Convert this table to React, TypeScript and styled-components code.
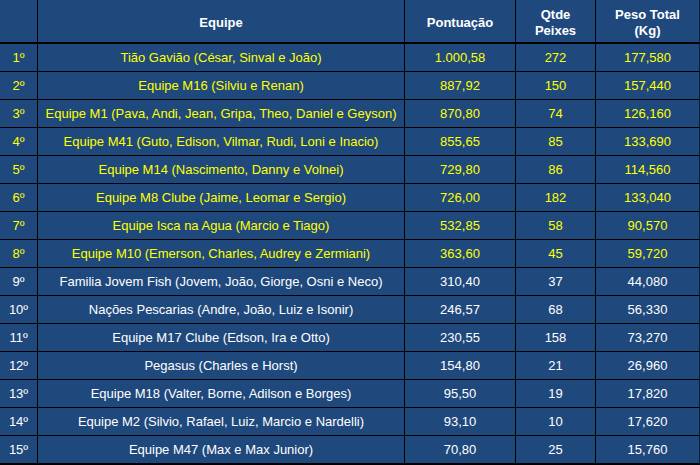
import React from 'react';
import styled, { createGlobalStyle } from 'styled-components';

const GlobalStyle = createGlobalStyle`
  html, body {
    margin: 0;
    padding: 0;
    background: #1f497d;
  }
`;

const Table = styled.table`
  width: 700px;
  table-layout: fixed;
  border-collapse: separate;
  border-spacing: 0;
  background: #1f497d;
  font-family: 'Liberation Sans', Arial, sans-serif;
`;

const HeadCell = styled.th<{ $w: number }>`
  width: ${p => p.$w}px;
  height: 44px;
  padding: 3px 2px 0;
  box-sizing: border-box;
  border-right: 1px solid #000;
  border-bottom: 2px solid #000;
  color: #fff;
  font-size: 13px;
  font-weight: bold;
  line-height: 16px;
  text-align: center;
  vertical-align: middle;
  &:last-child {
    border-right-color: #0d2036;
  }
`;

const Row = styled.tr<{ $last?: boolean }>`
  & > td {
    height: 27px;
    border-bottom: ${p => (p.$last ? '2px' : '1px')} solid #000;
  }
`;

const Cell = styled.td<{ $hi: boolean }>`
  padding: 0 2px;
  border-right: 1px solid #000;
  color: ${p => (p.$hi ? '#ffff00' : '#ffffff')};
  font-size: 13px;
  line-height: 16px;
  text-align: center;
  vertical-align: middle;
  white-space: nowrap;
  overflow: hidden;
  &:last-child {
    border-right-color: #0d2036;
  }
`;

interface Team {
  name: string;
  points: string;
  fish: number;
  weight: string;
}

const teams: Team[] = [
  { name: 'Tião Gavião (César, Sinval e João)', points: '1.000,58', fish: 272, weight: '177,580' },
  { name: 'Equipe M16 (Silviu e Renan)', points: '887,92', fish: 150, weight: '157,440' },
  { name: 'Equipe M1 (Pava, Andi, Jean, Gripa, Theo, Daniel e Geyson)', points: '870,80', fish: 74, weight: '126,160' },
  { name: 'Equipe M41 (Guto, Edison, Vilmar, Rudi, Loni e Inacio)', points: '855,65', fish: 85, weight: '133,690' },
  { name: 'Equipe M14 (Nascimento, Danny e Volnei)', points: '729,80', fish: 86, weight: '114,560' },
  { name: 'Equipe M8 Clube (Jaime, Leomar e Sergio)', points: '726,00', fish: 182, weight: '133,040' },
  { name: 'Equipe Isca na Agua (Marcio e Tiago)', points: '532,85', fish: 58, weight: '90,570' },
  { name: 'Equipe M10 (Emerson, Charles, Audrey e Zermiani)', points: '363,60', fish: 45, weight: '59,720' },
  { name: 'Familia Jovem Fish (Jovem, João, Giorge, Osni e Neco)', points: '310,40', fish: 37, weight: '44,080' },
  { name: 'Nações Pescarias (Andre, João, Luiz e Isonir)', points: '246,57', fish: 68, weight: '56,330' },
  { name: 'Equipe M17 Clube (Edson, Ira e Otto)', points: '230,55', fish: 158, weight: '73,270' },
  { name: 'Pegasus (Charles e Horst)', points: '154,80', fish: 21, weight: '26,960' },
  { name: 'Equipe M18 (Valter, Borne, Adilson e Borges)', points: '95,50', fish: 19, weight: '17,820' },
  { name: 'Equipe M2 (Silvio, Rafael, Luiz, Marcio e Nardelli)', points: '93,10', fish: 10, weight: '17,620' },
  { name: 'Equipe M47 (Max e Max Junior)', points: '70,80', fish: 25, weight: '15,760' },
];

const App: React.FC = () => (
  <>
    <GlobalStyle />
    <Table>
      <thead>
        <tr>
          <HeadCell $w={38}></HeadCell>
          <HeadCell $w={367}>Equipe</HeadCell>
          <HeadCell $w={111}>Pontuação</HeadCell>
          <HeadCell $w={80}>Qtde<br />Peixes</HeadCell>
          <HeadCell $w={104}>Peso Total<br />(Kg)</HeadCell>
        </tr>
      </thead>
      <tbody>
        {teams.map((t, i) => {
          // top 8 teams highlighted in yellow
          const hi = i < 8;
          return (
            <Row key={t.name} $last={i === teams.length - 1}>
              <Cell $hi={hi}>{i + 1}º</Cell>
              <Cell $hi={hi}>{t.name}</Cell>
              <Cell $hi={hi}>{t.points}</Cell>
              <Cell $hi={hi}>{t.fish}</Cell>
              <Cell $hi={hi}>{t.weight}</Cell>
            </Row>
          );
        })}
      </tbody>
    </Table>
  </>
);

export default App;
